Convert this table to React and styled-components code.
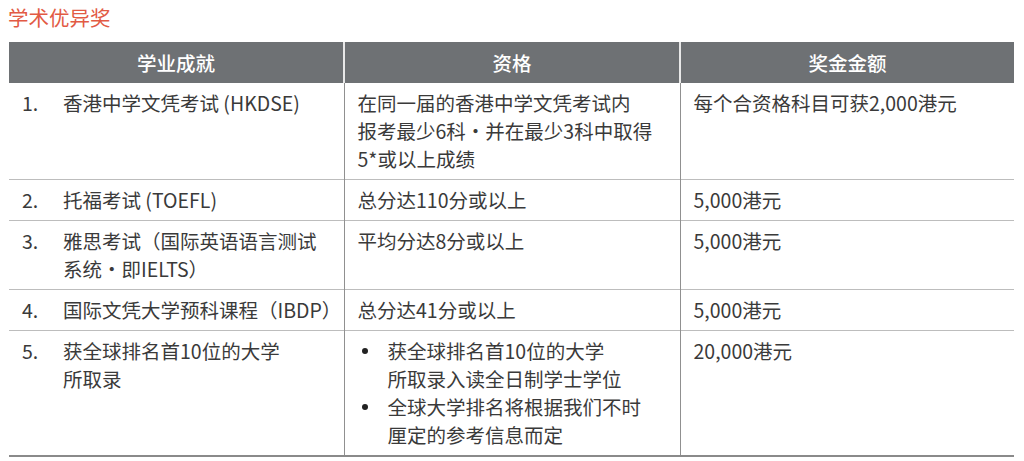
import React from 'react';
import styled, { createGlobalStyle } from 'styled-components';

const GlobalStyle = createGlobalStyle`
    body {
        margin: 0;
        background: #fff;
        font-family: "Noto Sans CJK SC", "Noto Sans", sans-serif;
        color: #3a3a3a;
    }
`

const rows = [
    {
        num: '1.',
        title: ['香港中学文凭考试 (HKDSE)'],
        rule: ['在同一届的香港中学文凭考试内', '报考最少6科·并在最少3科中取得', '5*或以上成绩'],
        amount: '每个合资格科目可获2,000港元'
    },
    { num: '2.', title: ['托福考试 (TOEFL)'], rule: ['总分达110分或以上'], amount: '5,000港元' },
    { num: '3.', title: ['雅思考试（国际英语语言测试', '系统·即IELTS）'], rule: ['平均分达8分或以上'], amount: '5,000港元' },
    { num: '4.', title: ['国际文凭大学预科课程（IBDP）'], rule: ['总分达41分或以上'], amount: '5,000港元' },
    {
        num: '5.',
        title: ['获全球排名首10位的大学', '所取录'],
        bullets: [
            ['获全球排名首10位的大学', '所取录入读全日制学士学位'],
            ['全球大学排名将根据我们不时', '厘定的参考信息而定']
        ],
        amount: '20,000港元'
    }
];

function Lines({ lines }) {
    return lines.map((l, i) => <Line key={i}>{l}</Line>);
}

function App() {
    return (
        <Page>
            <GlobalStyle />
            <Title>学术优异奖</Title>
            <Table>
                <colgroup>
                    <col style={{ width: 335 }} />
                    <col style={{ width: 336 }} />
                    <col style={{ width: 334 }} />
                </colgroup>
                <thead>
                    <tr>
                        <HeadCell>学业成就</HeadCell>
                        <HeadCell>资格</HeadCell>
                        <HeadCell>奖金金额</HeadCell>
                    </tr>
                </thead>
                <tbody>
                    {rows.map((r, idx) => (
                        <Row key={idx} $last={idx === rows.length - 1}>
                            <Cell>
                                <Numbered>
                                    <Num>{r.num}</Num>
                                    <div><Lines lines={r.title} /></div>
                                </Numbered>
                            </Cell>
                            <Cell>
                                {r.bullets ? (
                                    <BulletList>
                                        {r.bullets.map((b, i) => (
                                            <BulletItem key={i}>
                                                <Dot />
                                                <div><Lines lines={b} /></div>
                                            </BulletItem>
                                        ))}
                                    </BulletList>
                                ) : (
                                    <Lines lines={r.rule} />
                                )}
                            </Cell>
                            <Cell>{r.amount}</Cell>
                        </Row>
                    ))}
                </tbody>
            </Table>
        </Page>
    );
}

export default App;

const Page = styled.div`
    width: 1024px;
    height: 461px;
    box-sizing: border-box;
    padding: 3px 10px 0 9px;
`
const Title = styled.div`
    color: #e25a44;
    font-size: 20.5px;
    line-height: 28px;
    height: 39px;
    margin-left: -1px;
`
const Table = styled.table`
    width: 1005px;
    border-collapse: collapse;
    table-layout: fixed;
    font-size: 19.5px;
    line-height: 28px;
`
const HeadCell = styled.th`
    height: 41px;
    padding: 0;
    background: #6e7174;
    color: #fff;
    font-weight: 500;
    text-align: center;
    vertical-align: middle;
    border-left: 2px solid #e8e8e8;
    &:first-child {
        border-left: none;
    }
`
const Row = styled.tr`
    border-bottom: ${p => (p.$last ? '2px solid #8a8a8a' : '1px solid #bdbdbd')};
`
const Cell = styled.td`
    vertical-align: top;
    padding: 6px 12px 6px 13px;
    border-left: 1.5px solid #909090;
    &:first-child {
        border-left: none;
    }
`
const Numbered = styled.div`
    display: flex;
`
const Num = styled.div`
    width: 41px;
    flex-shrink: 0;
`
const Line = styled.div`
    white-space: nowrap;
`
const BulletList = styled.div`
    display: flex;
    flex-direction: column;
`
const BulletItem = styled.div`
    display: flex;
    align-items: flex-start;
`
const Dot = styled.span`
    width: 6px;
    height: 6px;
    border-radius: 50%;
    background: #222;
    flex-shrink: 0;
    margin: 11px 20px 0 4px;
`
